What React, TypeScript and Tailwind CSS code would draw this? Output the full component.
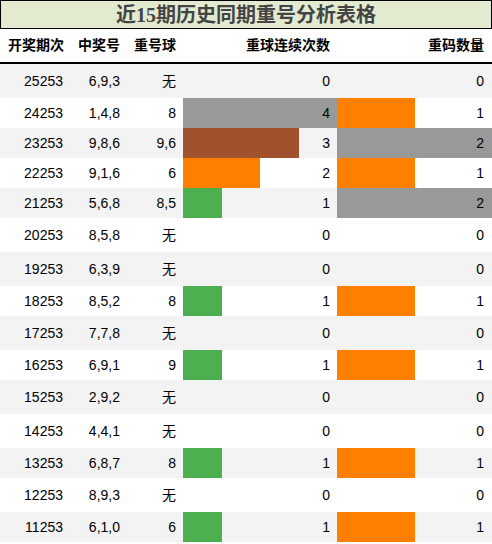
import React from "react";

type Row = { p: string; n: string; r: string; c: number; m: number };

const rows: Row[] = [
  { p: "25253", n: "6,9,3", r: "无", c: 0, m: 0 },
  { p: "24253", n: "1,4,8", r: "8", c: 4, m: 1 },
  { p: "23253", n: "9,8,6", r: "9,6", c: 3, m: 2 },
  { p: "22253", n: "9,1,6", r: "6", c: 2, m: 1 },
  { p: "21253", n: "5,6,8", r: "8,5", c: 1, m: 2 },
  { p: "20253", n: "8,5,8", r: "无", c: 0, m: 0 },
  { p: "19253", n: "6,3,9", r: "无", c: 0, m: 0 },
  { p: "18253", n: "8,5,2", r: "8", c: 1, m: 1 },
  { p: "17253", n: "7,7,8", r: "无", c: 0, m: 0 },
  { p: "16253", n: "6,9,1", r: "9", c: 1, m: 1 },
  { p: "15253", n: "2,9,2", r: "无", c: 0, m: 0 },
  { p: "14253", n: "4,4,1", r: "无", c: 0, m: 0 },
  { p: "13253", n: "6,8,7", r: "8", c: 1, m: 1 },
  { p: "12253", n: "8,9,3", r: "无", c: 0, m: 0 },
  { p: "11253", n: "6,1,0", r: "6", c: 1, m: 1 },
];

const cColor: Record<number, string> = {
  4: "bg-[#999999]",
  3: "bg-[#a0522d]",
  2: "bg-[#ff8000]",
  1: "bg-[#4caf50]",
};
const mColor: Record<number, string> = {
  2: "bg-[#999999]",
  1: "bg-[#ff8000]",
};

const font = {
  fontFamily: '"Liberation Sans", "Noto Sans CJK SC", sans-serif',
};

export default function App() {
  return (
    <div className="w-[492px] h-[544px] overflow-hidden bg-white text-black" style={font}>
      <div className="h-[29px] border border-black bg-[#e2ebd0] flex items-center justify-center">
        <span
          className="text-[20px] font-bold text-[#444444] leading-none"
          style={{ fontFamily: '"Liberation Serif", "Noto Sans CJK SC", serif' }}
        >
          近15期历史同期重号分析表格
        </span>
      </div>
      <div className="grid grid-cols-[70px_57px_56px_154px_155px] h-[35px] border-b-2 border-black text-[14px] font-bold items-center">
        <div className="text-right pr-[6px]">开奖期次</div>
        <div className="text-right pr-[7px]">中奖号</div>
        <div className="text-right pr-[7px]">重号球</div>
        <div className="text-right pr-[7px]">重球连续次数</div>
        <div className="text-right pr-[8px]">重码数量</div>
      </div>
      {rows.map((row, i) => (
        <div
          key={row.p}
          className={`grid grid-cols-[70px_57px_56px_154px_155px] text-[14px] ${
            row.r === "无" ? "h-[34px]" : "h-[30px]"
          } ${i % 2 === 0 ? "bg-[#f3f3f3]" : "bg-white"}`}
        >
          <div className="flex items-center justify-end pr-[7px]">{row.p}</div>
          <div className="flex items-center justify-end pr-[7px]">{row.n}</div>
          <div className="flex items-center justify-end pr-[7px]">{row.r}</div>
          <div className="relative flex items-center justify-end pr-[7px]">
            {row.c > 0 && (
              <div
                className={`absolute left-0 top-0 bottom-0 ${cColor[row.c]}`}
                style={{ width: `${(row.c / 4) * 100}%` }}
              />
            )}
            <span className="relative">{row.c}</span>
          </div>
          <div className="relative flex items-center justify-end pr-[8px]">
            {row.m > 0 && (
              <div
                className={`absolute left-0 top-0 bottom-0 ${mColor[row.m]}`}
                style={{ width: `${(row.m / 2) * 100}%` }}
              />
            )}
            <span className="relative">{row.m}</span>
          </div>
        </div>
      ))}
    </div>
  );
}
